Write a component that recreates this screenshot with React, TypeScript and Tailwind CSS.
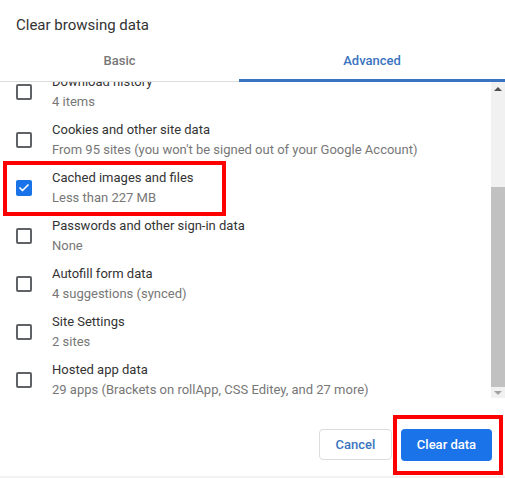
import { Check } from 'lucide-react';

const items = [
  { title: 'Download history', sub: '4 items', checked: false },
  { title: 'Cookies and other site data', sub: "From 95 sites (you won't be signed out of your Google Account)", checked: false },
  { title: 'Cached images and files', sub: 'Less than 227 MB', checked: true },
  { title: 'Passwords and other sign-in data', sub: 'None', checked: false },
  { title: 'Autofill form data', sub: '4 suggestions (synced)', checked: false },
  { title: 'Site Settings', sub: '2 sites', checked: false },
  { title: 'Hosted app data', sub: '29 apps (Brackets on rollApp, CSS Editey, and 27 more)', checked: false },
];

function Row({ title, sub, checked }: { title: string; sub: string; checked: boolean }) {
  return (
    <div className="relative flex h-12 items-center pl-4">
      {checked ? (
        <div className="flex h-4 w-4 items-center justify-center rounded-[2px] bg-[#1a73e8]">
          <Check className="h-3 w-3 text-white" strokeWidth={3.5} />
        </div>
      ) : (
        <div className="h-4 w-4 rounded-[2px] border-2 border-[#5f6368]" />
      )}
      <div className="ml-5 flex flex-col text-[13px] leading-5">
        <span className="text-[#333]">{title}</span>
        <span className="text-[#777]">{sub}</span>
      </div>
      {checked && <div className="absolute left-[3px] top-[-3px] h-[55px] w-[223px] border-4 border-[#ff0000]" />}
    </div>
  );
}

export default function App() {
  return (
    <div className="flex h-[478px] w-[505px] flex-col bg-white font-['Roboto',sans-serif]">
      <div className="flex h-[45px] items-center pl-4 pt-[5px] text-[15px] text-[#333]">Clear browsing data</div>
      <div className="flex h-[37px] border-b border-[#dddddd] text-[13px] font-medium">
        <div className="flex w-[239px] items-center justify-center pb-[5px] text-[#777]">Basic</div>
        <div className="-mb-px flex flex-1 items-center justify-center border-b-[3px] border-[#3a74c0] pb-[2px] text-[#3a74c0]">
          Advanced
        </div>
      </div>
      <div className="flex h-[316px]">
        <div className="flex-1 overflow-hidden">
          <div className="-mt-[14px]">
            {items.map((it) => (
              <Row key={it.title} {...it} />
            ))}
          </div>
        </div>
        <div className="flex w-[14px] flex-col bg-[#f1f1f1]">
          <div className="flex h-[14px] items-center justify-center">
            <div className="h-0 w-0 border-x-[4px] border-b-[4px] border-x-transparent border-b-[#505050]" />
          </div>
          <div className="mt-[91px] h-[200px] bg-[#c1c1c1]" />
          <div className="flex flex-1 items-center justify-center">
            <div className="h-0 w-0 border-x-[4px] border-t-[4px] border-x-transparent border-t-[#a3a3a3]" />
          </div>
        </div>
      </div>
      <div className="flex flex-1 items-start justify-end gap-[9px] pr-[13px] pt-[31px]">
        <button className="h-[31px] w-[73px] rounded border border-[#dadce0] text-[13px] font-medium text-[#3a74c0]">
          Cancel
        </button>
        <div className="relative">
          <button className="h-[32px] w-[91px] rounded bg-[#1a73e8] text-[13px] font-medium text-white">Clear data</button>
          <div className="absolute left-[-8px] top-[-14px] h-[60px] w-[110px] border-4 border-[#ff0000]" />
        </div>
      </div>
      <div className="h-[2px] bg-[#f2f2f2]" />
    </div>
  );
}
